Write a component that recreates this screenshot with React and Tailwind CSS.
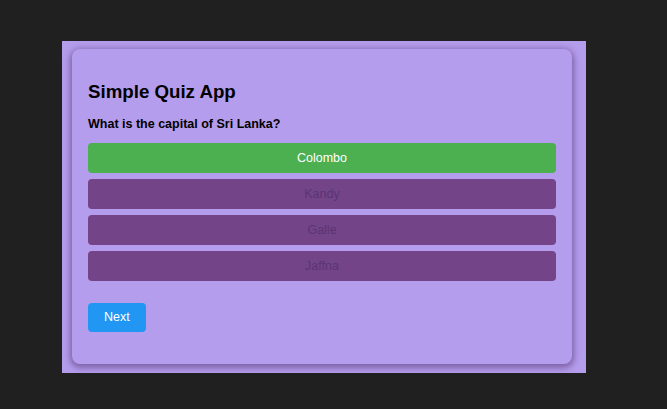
const OPTIONS = [
  { label: 'Colombo', correct: true },
  { label: 'Kandy' },
  { label: 'Galle' },
  { label: 'Jaffna' }
]

export default function App() {
  return (
    <div
      className="w-[667px] h-[409px] bg-[#202020] pt-[41px] pl-[62px]"
      style={{ fontFamily: '"Liberation Sans", Arial, sans-serif' }}
    >
      <div className="w-[524px] h-[332px] bg-[#b59ded] pt-[8px] pl-[10px]">
        <div className="w-[500px] h-[315px] rounded-lg bg-[#b59ded] p-4 shadow-[0_2px_6px_2px_rgba(80,50,110,0.55)]">
          <h2 className="mt-[16px] text-[18.7px] leading-[22px] font-bold text-black">Simple Quiz App</h2>
          <p className="mt-[14px] text-[12.5px] leading-[15px] font-bold text-black">
            What is the capital of Sri Lanka?
          </p>

          <div className="mt-[11px] flex flex-col gap-[6px]">
            {OPTIONS.map((opt) => (
              <button
                key={opt.label}
                disabled={!opt.correct}
                className={`h-[30px] w-full rounded text-[12.5px] ${
                  opt.correct ? 'bg-[#4caf50] text-white' : 'bg-[#734487] text-[#5b3474]'
                }`}
              >
                {opt.label}
              </button>
            ))}
          </div>

          <button className="mt-[22px] h-[29px] px-4 rounded bg-[#2196f3] text-white text-[12.5px]">
            Next
          </button>
        </div>
      </div>
    </div>
  )
}
